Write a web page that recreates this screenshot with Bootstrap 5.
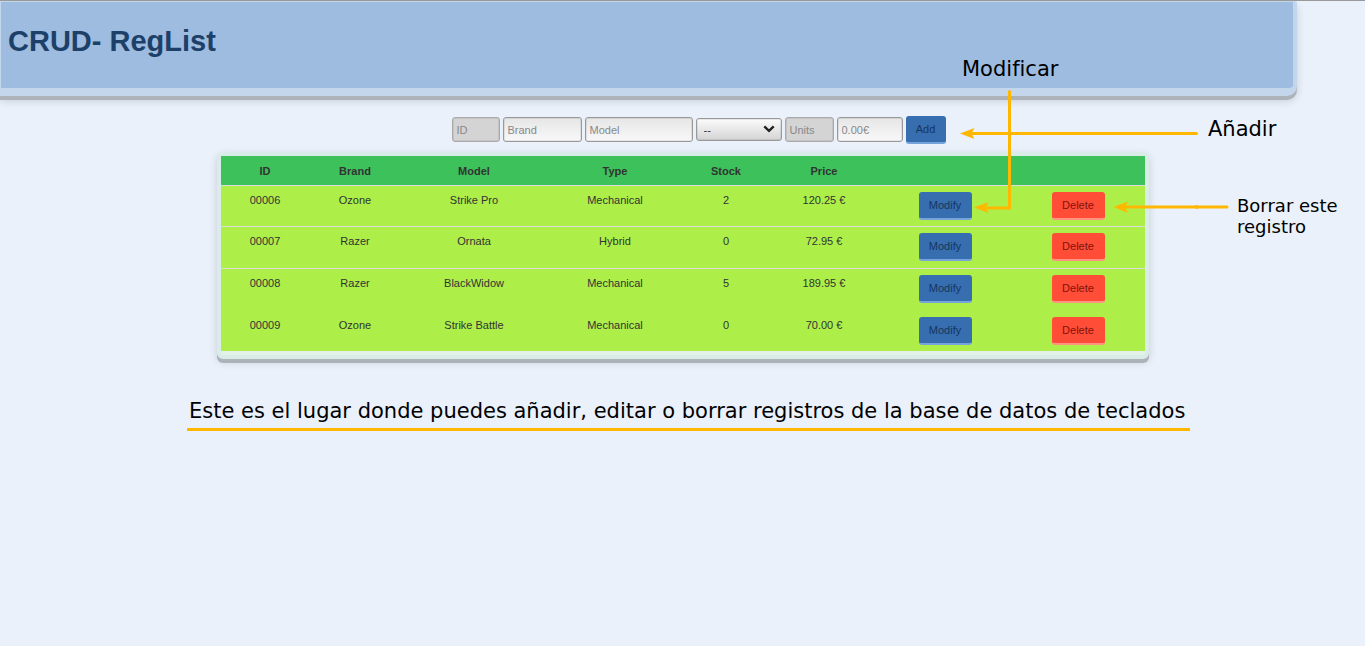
<!DOCTYPE html>
<html lang="es">
<head>
<meta charset="utf-8">
<meta name="viewport" content="width=device-width, initial-scale=1">
<title>CRUD- RegList</title>
<link href="https://cdn.jsdelivr.net/npm/bootstrap@5.3.0/dist/css/bootstrap.min.css" rel="stylesheet">
<style>
  body { background: #eaf1fa; color: #333; font-family: "Liberation Sans", Arial, sans-serif; font-size: 11px; line-height: 16px; border-top: 1px solid #999; }
  .app-header { width: 95%; height: 95px; background: #9dbce0; border: solid #c4d6ec; border-width: 1px 4px 8px 1px; border-radius: 0 2px 10px 0; box-shadow: 0 4px 0 #aeb3b9, 0 5px 8px rgba(0,0,0,.15); padding: 19px 7px; }
  .app-header h1 { font-size: 29px; line-height: 40px; font-weight: 700; color: #1c4068; }
  .stage { max-width: 933px; padding-left: 1px; }
  .entry { gap: 3px; padding: 20px 0 8px 31px; }
  .entry .form-control { margin-top: 1px; }
  .entry .form-select { margin-top: 2px; }
  .entry .form-control, .entry .form-select { height: 25px; font-size: 11px; line-height: 16px; padding: 0 4px; border: 1px solid #999; border-radius: 3px; color: #333; background-color: #f2f2f2; background-image: linear-gradient(#e6e6e6, #f8f8f8); box-shadow: inset 0 0 0 1px rgba(0,0,0,.08); }
  .entry .form-control::placeholder { color: #888; opacity: 1; }
  .entry .form-control:disabled { background: #d4d4d4; border-color: #aaa; }
  .entry .form-select { height: 23px; padding: 0 7px; background: linear-gradient(#fbfbfb, #d4d4d4); }
  .w-id { width: 48px; } .w-brand { width: 79px; } .w-model { width: 108px; }
  .w-type { width: 86px; } .w-units { width: 49px; } .w-price { width: 66px; }
  .chevron { position: absolute; right: 7px; top: 9px; pointer-events: none; }
  .act { height: 28px; width: 53px; padding: 0; font-size: 11px; line-height: 26px; border: 0; border-bottom: 2px solid; border-radius: 3px; display: block; margin: 0 auto; }
  .act-blue, .act-blue:hover { background: #366eb0; border-color: #76a3d9; color: #17365d; }
  .act-red, .act-red:hover { background: #ff4d38; border-color: #ff9382; color: #7d140c; }
  .act-add { width: 40px; margin: 0; }
  .records { background: #e4f1e8; border: 4px solid #daece7; border-radius: 6px; padding-bottom: 4px; box-shadow: 0 4px 0 #adb2b8, 0 3px 8px rgba(0,0,0,.15); }
  .records table { table-layout: fixed; width: 100%; text-align: center; border-collapse: separate; border-spacing: 0; color: #333; background: #adee49; }
  .records th { height: 29px; padding: 0; background: #3cc15b; font-weight: 700; text-align: center; }
  .records td { height: 41px; padding: 6px 0 0; border-top: 1px solid #ddd; vertical-align: top; }
  .records tbody tr:nth-child(2) td, .records tbody tr:nth-child(3) td { height: 42px; }
  .records tbody tr:last-child td { border-color: transparent; }
  .note { font-family: "DejaVu Sans", sans-serif; color: #000; font-size: 21px; line-height: 26px; white-space: nowrap; }
  .pin { position: absolute; }
  .note-modify { left: 746px; top: -40px; }
  .note-add { left: 992px; top: 20px; }
  .note-delete { left: 1021px; top: 99px; font-size: 18px; line-height: 21px; }
  .arrows { left: 744px; top: -8px; pointer-events: none; }
  .summary { margin: 39px -41px 0 -30px; padding: 0 2px 4px; border-bottom: 3px solid #ffb700; }
</style>
</head>
<body>
<header class="app-header"><h1 class="m-0">CRUD- RegList</h1></header>
<main class="stage mx-auto position-relative">
  <form class="entry d-flex justify-content-center align-items-start">
    <input class="form-control w-id" placeholder="ID" aria-label="ID" disabled>
    <input class="form-control w-brand" placeholder="Brand" aria-label="Brand">
    <input class="form-control w-model" placeholder="Model" aria-label="Model">
    <div class="position-relative">
      <select class="form-select w-type" aria-label="Type"><option>--</option><option>Mechanical</option><option>Hybrid</option></select>
      <svg class="chevron" width="12" height="8" viewBox="0 0 12 8" fill="none" stroke="#222" stroke-width="2.4"><path d="M1.3 1.3 6 5.8 10.7 1.3"/></svg>
    </div>
    <input class="form-control w-units" placeholder="Units" aria-label="Units" disabled>
    <input class="form-control w-price" placeholder="0.00€" aria-label="Price">
    <button type="button" class="btn act act-blue act-add">Add</button>
  </form>
  <div class="records">
    <table>
      <colgroup><col style="width:88px"><col style="width:92px"><col style="width:146px"><col style="width:136px"><col style="width:86px"><col style="width:110px"><col style="width:132px"><col style="width:134px"></colgroup>
      <thead><tr><th>ID</th><th>Brand</th><th>Model</th><th>Type</th><th>Stock</th><th>Price</th><th></th><th></th></tr></thead>
      <tbody>
        <tr><td>00006</td><td>Ozone</td><td>Strike Pro</td><td>Mechanical</td><td>2</td><td>120.25 €</td><td><button type="button" class="btn act act-blue">Modify</button></td><td><button type="button" class="btn act act-red">Delete</button></td></tr>
        <tr><td>00007</td><td>Razer</td><td>Ornata</td><td>Hybrid</td><td>0</td><td>72.95 €</td><td><button type="button" class="btn act act-blue">Modify</button></td><td><button type="button" class="btn act act-red">Delete</button></td></tr>
        <tr><td>00008</td><td>Razer</td><td>BlackWidow</td><td>Mechanical</td><td>5</td><td>189.95 €</td><td><button type="button" class="btn act act-blue">Modify</button></td><td><button type="button" class="btn act act-red">Delete</button></td></tr>
        <tr><td>00009</td><td>Ozone</td><td>Strike Battle</td><td>Mechanical</td><td>0</td><td>70.00 €</td><td><button type="button" class="btn act act-blue">Modify</button></td><td><button type="button" class="btn act act-red">Delete</button></td></tr>
      </tbody>
    </table>
  </div>
  <p class="note summary">Este es el lugar donde puedes añadir, editar o borrar registros de la base de datos de teclados</p>

  <svg class="pin arrows" width="272" height="130" viewBox="0 0 272 130" fill="none" stroke="#ffb700" stroke-width="3" stroke-linecap="round">
    <path d="M49.5 3.5V120H24M10 45.500H236.500M164 119H267"/>
    <g fill="#ffb700" stroke="none">
      <path d="M0 45.500 14.500 40 11.500 45.500 14.500 51z"/>
      <path d="M14 119.500 28.500 114 25.500 119.500 28.500 125z"/>
      <path d="M153.500 119 168 113.500 165 119 168 125z"/>
      <circle cx="236.500" cy="119" r="2"/>
    </g>
  </svg>
  <div class="note pin note-modify">Modificar</div>
  <div class="note pin note-add">Añadir</div>
  <div class="note pin note-delete">Borrar este<br>registro</div>
</main>
<script src="https://cdn.jsdelivr.net/npm/bootstrap@5.3.0/dist/js/bootstrap.bundle.min.js"></script>
</body>
</html>
